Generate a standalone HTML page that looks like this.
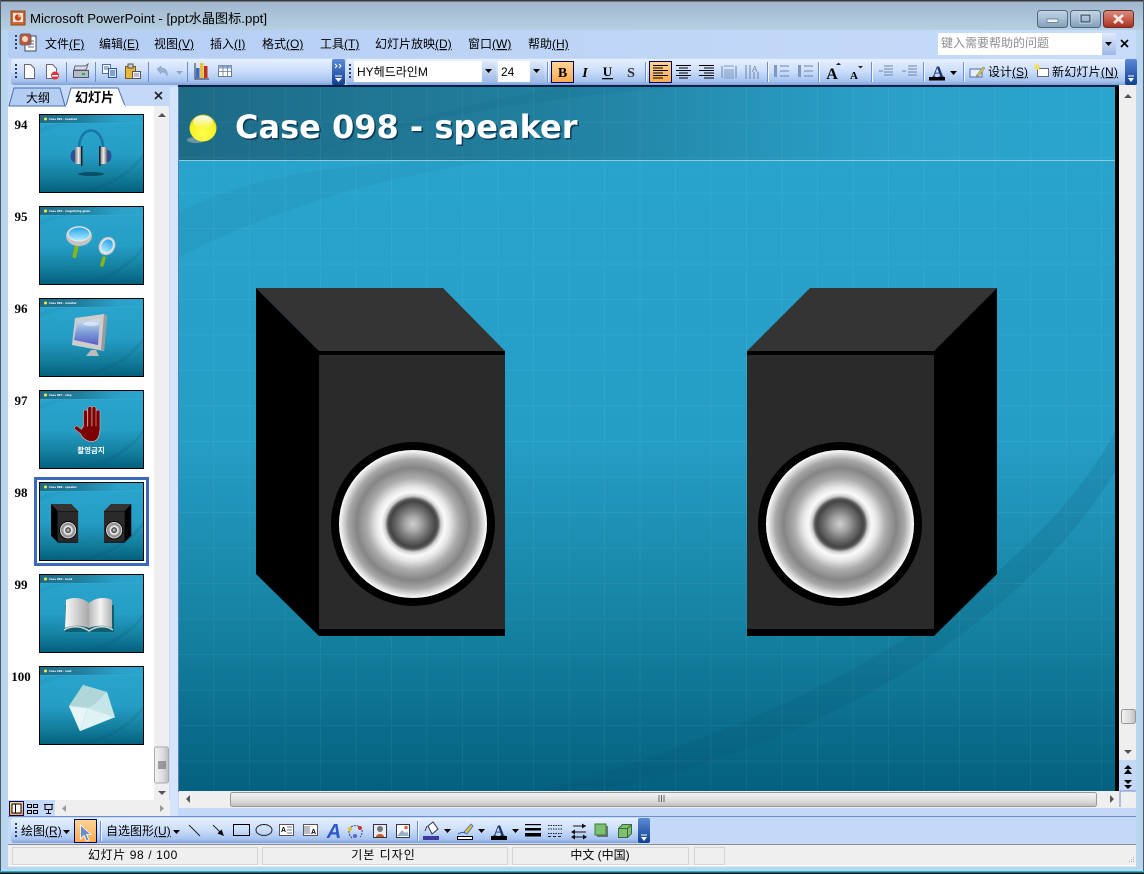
<!DOCTYPE html>
<html><head><meta charset="utf-8"><title>Microsoft PowerPoint</title>
<style>
html,body{margin:0;padding:0;background:#c4d9f8}
svg{display:block}
text{font-family:"Liberation Sans","Noto Sans CJK SC",sans-serif;font-size:12px;fill:#000}
.kr{font-family:"Liberation Sans","Noto Sans CJK KR",sans-serif}
.u{text-decoration:underline}
.n{font-family:"Liberation Serif",serif;font-weight:bold;font-size:13px;text-anchor:middle}
.tt{font-family:"DejaVu Sans",sans-serif;font-weight:bold;font-size:2.6px;fill:#fff}
</style></head><body>
<svg xmlns="http://www.w3.org/2000/svg" width="1144" height="874" viewBox="0 0 1144 874">
<defs>
<linearGradient id="title" x1="0" y1="0" x2="0" y2="1"><stop offset="0" stop-color="#9fb5cc"/><stop offset="1" stop-color="#b6cfe2"/></linearGradient>
<linearGradient id="menu" x1="0" y1="0" x2="1" y2="0"><stop offset="0" stop-color="#b4cdf3"/><stop offset="1" stop-color="#c8dcfa"/></linearGradient>
<linearGradient id="tb" x1="0" y1="0" x2="0" y2="1"><stop offset="0" stop-color="#e6f0fe"/><stop offset=".45" stop-color="#cddffb"/><stop offset=".85" stop-color="#a6c3ef"/><stop offset="1" stop-color="#7f9fd8"/></linearGradient>
<linearGradient id="chev" x1="0" y1="0" x2="0" y2="1"><stop offset="0" stop-color="#5b8ad6"/><stop offset="1" stop-color="#103f91"/></linearGradient>
<linearGradient id="dd" x1="0" y1="0" x2="0" y2="1"><stop offset="0" stop-color="#dfeafc"/><stop offset="1" stop-color="#9db9e8"/></linearGradient>
<linearGradient id="or" x1="0" y1="0" x2="0" y2="1"><stop offset="0" stop-color="#ffd596"/><stop offset="1" stop-color="#fba94f"/></linearGradient>
<linearGradient id="wb" x1="0" y1="0" x2="0" y2="1"><stop offset="0" stop-color="#c4d6e6"/><stop offset=".5" stop-color="#a5bdd3"/><stop offset="1" stop-color="#7f9db8"/></linearGradient>
<linearGradient id="wc" x1="0" y1="0" x2="0" y2="1"><stop offset="0" stop-color="#d98e82"/><stop offset=".5" stop-color="#c9604f"/><stop offset="1" stop-color="#a3301f"/></linearGradient>
<linearGradient id="sb" x1="0" y1="0" x2="0" y2="1"><stop offset="0" stop-color="#f4f4f4"/><stop offset=".6" stop-color="#dcdcdc"/><stop offset="1" stop-color="#bdbdbd"/></linearGradient>
<linearGradient id="sbv" x1="0" y1="0" x2="1" y2="0"><stop offset="0" stop-color="#f4f4f4"/><stop offset=".6" stop-color="#dcdcdc"/><stop offset="1" stop-color="#bdbdbd"/></linearGradient>
<linearGradient id="sky" x1="0" y1="0" x2="0" y2="1"><stop offset="0" stop-color="#2aa5ce"/><stop offset=".5" stop-color="#259ec6"/><stop offset=".78" stop-color="#14809f"/><stop offset="1" stop-color="#04607f"/></linearGradient>
<linearGradient id="hd" x1="0" y1="0" x2="1" y2="0"><stop offset="0" stop-color="#1d6b86"/><stop offset=".4" stop-color="#21809f"/><stop offset=".75" stop-color="#2aa0c8"/><stop offset="1" stop-color="#2aa5ce"/></linearGradient>
<pattern id="grid" width="35.5" height="35.5" patternUnits="userSpaceOnUse"><path d="M35 0V35.5M0 35H35.5" stroke="#fff" stroke-opacity=".05" fill="none"/></pattern>
<radialGradient id="cone"><stop offset="0" stop-color="#cfcfcf"/><stop offset=".1" stop-color="#a8a8a8"/><stop offset=".22" stop-color="#6c6c6c"/><stop offset=".31" stop-color="#444"/><stop offset=".34" stop-color="#5c5c5c"/><stop offset=".38" stop-color="#d0d0d0"/><stop offset=".43" stop-color="#fafafa"/><stop offset=".5" stop-color="#e6e6e6"/><stop offset=".62" stop-color="#ababab"/><stop offset=".76" stop-color="#858585"/><stop offset=".87" stop-color="#a6a6a6"/><stop offset="1" stop-color="#fff"/></radialGradient>
<radialGradient id="ball" cx=".5" cy=".7" r=".65"><stop offset="0" stop-color="#ffff50"/><stop offset=".8" stop-color="#f5f020"/><stop offset="1" stop-color="#c8c020"/></radialGradient>
<linearGradient id="ballh" x1="0" y1="0" x2="0" y2="1"><stop offset="0" stop-color="#fff"/><stop offset="1" stop-color="#fff" stop-opacity="0"/></linearGradient>
<linearGradient id="met" x1="0" y1="0" x2="1" y2="0"><stop offset="0" stop-color="#777"/><stop offset=".5" stop-color="#eee"/><stop offset="1" stop-color="#666"/></linearGradient>
<linearGradient id="lens" x1="0" y1="0" x2="0" y2="1"><stop offset="0" stop-color="#20a0e8"/><stop offset="1" stop-color="#b8f0ff"/></linearGradient>
<linearGradient id="scr" x1="0" y1="0" x2="0" y2="1"><stop offset="0" stop-color="#cfe0f0"/><stop offset=".5" stop-color="#7fa0d8"/><stop offset="1" stop-color="#5a5cc8"/></linearGradient>
<linearGradient id="pg" x1="0" y1="0" x2="1" y2="0"><stop offset="0" stop-color="#f8f8f8"/><stop offset="1" stop-color="#a8a8a8"/></linearGradient>
<linearGradient id="pg2" x1="1" y1="0" x2="0" y2="0"><stop offset="0" stop-color="#b0b0b0"/><stop offset=".5" stop-color="#f4f4f4"/><stop offset="1" stop-color="#b8b8b8"/></linearGradient>

<g id="bg">
<rect width="936" height="704" fill="url(#sky)"/>
<rect width="936" height="73" fill="url(#hd)"/>
<path d="M0 125C90 80 190 75 340 70C190 90 90 125 0 170Z" fill="#0a5878" opacity=".07"/>
<path d="M60 100C150 50 280 18 500 0L380 0C260 22 140 55 60 100Z" fill="#0a5878" opacity=".10"/>
<path d="M360 704C600 640 840 520 936 345L936 385C840 540 640 660 420 704Z" fill="#0a4f70" opacity=".16"/>
<rect width="936" height="704" fill="url(#grid)"/>
<rect y="73" width="936" height="1" fill="#8ccbdf"/>
</g>
<g id="spk">
<polygon points="256,288 443,288 505,351 319,351" fill="#343434"/>
<polygon points="256,288 319,351 319,636 256,574" fill="#000"/>
<rect x="319" y="351" width="186" height="285" fill="#2a2a2a"/>
<rect x="319" y="351" width="186" height="4" fill="#000"/>
<rect x="319" y="629" width="186" height="7" fill="#000"/>
<circle cx="413" cy="524" r="82" fill="#000"/>
<circle cx="413" cy="524" r="74" fill="url(#cone)"/>
</g>
<g id="spr">
<polygon points="810,288 997,288 934,351 747,351" fill="#343434"/>
<polygon points="997,288 934,351 934,636 997,574" fill="#000"/>
<rect x="747" y="351" width="187" height="285" fill="#2a2a2a"/>
<rect x="747" y="351" width="187" height="4" fill="#000"/>
<rect x="747" y="629" width="187" height="7" fill="#000"/>
<circle cx="840" cy="524" r="82" fill="#000"/>
<circle cx="840" cy="524" r="74" fill="url(#cone)"/>
</g>
<g id="grip" fill="#27416f"><rect x="0" y="0" width="2" height="2"/><rect x="0" y="4" width="2" height="2"/><rect x="0" y="8" width="2" height="2"/><rect x="0" y="12" width="2" height="2"/></g>
<path id="da" d="M0 0H7L3.5 4Z" fill="#000"/>
</defs>

<!-- window frame -->
<rect width="1144" height="874" fill="#b9d6ee"/>
<rect width="1144" height="30" fill="url(#title)"/>
<rect width="1144" height="1.5" fill="#3a3a3a"/>
<rect x="0" width="1" height="874" fill="#4a5a68"/>
<rect x="1143" width="1" height="874" fill="#4a5a68"/>
<rect x="8" y="30" width="1128" height="815" fill="#c4d9f8"/>
<rect x="8" y="30" width="1128" height="28" fill="url(#menu)"/>
<rect y="871" width="1144" height="1.5" fill="#25b5cf"/>
<rect y="872.5" width="1144" height="1.5" fill="#111"/>

<!-- title -->
<g>
<rect x="11" y="11" width="14" height="14" fill="#d8632e" stroke="#8a4a2a"/>
<rect x="13" y="13" width="10" height="9" fill="#fbe8d8"/>
<circle cx="18" cy="17.5" r="3.2" fill="#c6421c"/>
<path d="M18 17.5V14.3A3.2 3.2 0 0 1 21.2 17.5Z" fill="#f2a06a"/>
</g>
<text x="30" y="23" style="font-size:13px" textLength="237" lengthAdjust="spacingAndGlyphs">Microsoft PowerPoint - [ppt水晶图标.ppt]</text>
<rect x="1037.5" y="10.5" width="30" height="17" rx="3" fill="url(#wb)" stroke="#54687c"/>
<rect x="1047" y="19" width="11" height="3.5" fill="#eef4f8" stroke="#5a6a7c" stroke-width=".7"/>
<rect x="1070.5" y="10.5" width="30" height="17" rx="3" fill="url(#wb)" stroke="#54687c"/>
<rect x="1081" y="15" width="9" height="7" fill="none" stroke="#41566e" stroke-width="1.4"/><rect x="1080" y="14" width="11" height="9" fill="none" stroke="#eef4f8" stroke-width=".6"/>
<rect x="1103.5" y="10.5" width="30" height="17" rx="3" fill="url(#wc)" stroke="#6e2a22"/>
<path d="M1114 15L1123 23M1123 15L1114 23" stroke="#f5e6e2" stroke-width="2.8"/>

<!-- menu -->
<use href="#grip" x="15" y="35"/>
<g>
<rect x="25" y="36" width="11" height="15" fill="#fff" stroke="#445"/>
<rect x="20" y="34" width="11" height="11" rx="2" fill="#c4553a" stroke="#666"/>
<circle cx="25" cy="39" r="3" fill="#f4d8c0"/>
<path d="M28 41H34M28 44H34M28 47H34" stroke="#668"/>
</g>
<text x="45" y="48">文件<tspan class="u">(F)</tspan></text>
<text x="99" y="48">编辑<tspan class="u">(E)</tspan></text>
<text x="154" y="48">视图<tspan class="u">(V)</tspan></text>
<text x="210" y="48">插入<tspan class="u">(I)</tspan></text>
<text x="262" y="48">格式<tspan class="u">(O)</tspan></text>
<text x="320" y="48">工具<tspan class="u">(T)</tspan></text>
<text x="375" y="48">幻灯片放映<tspan class="u">(D)</tspan></text>
<text x="468" y="48">窗口<tspan class="u">(W)</tspan></text>
<text x="528" y="48">帮助<tspan class="u">(H)</tspan></text>
<rect x="938" y="33" width="178" height="22" fill="#fff"/>
<rect x="1102" y="33" width="14" height="22" fill="url(#dd)"/>
<text x="941" y="47" style="fill:#8f8f8f">键入需要帮助的问题</text>
<use href="#da" x="1105" y="42"/>
<path d="M1121 40L1128 47M1128 40L1121 47" stroke="#000" stroke-width="1.6"/>

<!-- toolbar 1 & 2 -->
<rect x="11" y="59" width="334" height="26" rx="3" fill="url(#tb)"/>
<rect x="332" y="59" width="13" height="26" rx="2" fill="url(#chev)"/>
<path d="M335 64l2 2-2 2M339 64l2 2-2 2" stroke="#fff" fill="none"/><path d="M335 76h7" stroke="#fff"/><path d="M335 78h7l-3.5 4z" fill="#fff"/>
<rect x="346" y="59" width="791" height="26" rx="3" fill="url(#tb)"/>
<rect x="1125" y="59" width="12" height="26" rx="2" fill="url(#chev)"/>
<path d="M1128 76h6" stroke="#fff"/><path d="M1128 78h6l-3 4z" fill="#fff"/>
<use href="#grip" x="15" y="64"/>
<use href="#grip" x="349" y="64"/>

<!-- new -->
<path d="M24.5 64.5h6l4 4v10h-10z" fill="#fff" stroke="#667"/>
<path d="M46.5 64.5h6l4 4v10h-10z" fill="#fff" stroke="#667"/>
<circle cx="55" cy="75.500" r="4" fill="#d33"/><rect x="52" y="75" width="6" height="1.500" fill="#fff"/>
<path d="M66.500 62v20M95.500 62v20M148.500 62v20M187.500 62v20" stroke="#6c8fc8"/>
<!-- print -->
<path d="M75 66h10l3-2-2 6H74z" fill="#dde" stroke="#667"/>
<rect x="73.500" y="70.500" width="15" height="7" fill="#b4bcc8" stroke="#556"/><rect x="82" y="73" width="3" height="2" fill="#3a3"/>
<!-- copy -->
<rect x="102.500" y="64.500" width="8" height="9" fill="#fff" stroke="#4a6ea8"/><path d="M104 67h5M104 69h5" stroke="#4a6ea8"/>
<rect x="108.500" y="68.500" width="8" height="9" fill="#dbe8fa" stroke="#2c5aa0"/><path d="M110 71h5M110 73h5M110 75h5" stroke="#2c5aa0"/>
<!-- paste -->
<rect x="125.500" y="66.500" width="10" height="12" fill="#e4b93c" stroke="#7a5a1a"/><rect x="128" y="64" width="5" height="4" fill="#ccc" stroke="#555"/>
<rect x="132.500" y="71.500" width="8" height="7" fill="#f0f0f8" stroke="#556"/><path d="M134 74h5M134 76h5" stroke="#889"/>
<!-- undo -->
<path d="M157 69l4-3v2c5 0 7 3 6 8-1-3-3-4-6-4v2z" fill="#9ab0d0" stroke="#8198be" stroke-width=".5"/>
<path d="M176 71h7l-3.500 3.500z" fill="#8ea5c8"/>
<!-- chart -->
<rect x="196" y="68" width="3.500" height="10" fill="#3a6ad0"/><rect x="200" y="63" width="3.500" height="15" fill="#e8c030"/><rect x="204" y="66" width="3.500" height="12" fill="#c03020"/>
<path d="M195 63v16h14" stroke="#333" fill="none"/>
<!-- table -->
<rect x="218.500" y="65.500" width="13" height="11" fill="#fff" stroke="#667c9c"/><rect x="218.500" y="65.500" width="13" height="3" fill="#8faad0"/><path d="M223 66v10M227.500 66v10M219 71.500h12" stroke="#667c9c" stroke-width=".8"/>

<!-- font box -->
<rect x="354" y="61" width="142" height="21" fill="#fff"/>
<rect x="482" y="61" width="14" height="21" fill="url(#dd)"/>
<text x="357" y="76" class="kr" style="font-size:12px">HY헤드라인M</text>
<use href="#da" x="485" y="69"/>
<rect x="498" y="61" width="46" height="21" fill="#fff"/>
<rect x="530" y="61" width="14" height="21" fill="url(#dd)"/>
<text x="501" y="76" style="font-size:12px">24</text>
<use href="#da" x="533" y="69"/>
<path d="M547.500 62v20M645.500 62v20M767.500 62v20M818.500 62v20M871.500 62v20M923.500 62v20M963.500 62v20" stroke="#6c8fc8"/><path d="M548.500 62v20M646.500 62v20M768.500 62v20M819.500 62v20M872.500 62v20M924.500 62v20M964.500 62v20" stroke="#f2f7ff"/>

<rect x="551.500" y="61.500" width="22" height="21" fill="url(#or)" stroke="#00006e"/>
<text x="562.500" y="77" style="font-family:'Liberation Serif',serif;font-weight:bold;font-size:14px" text-anchor="middle">B</text>
<text x="585" y="77" style="font-family:'Liberation Serif',serif;font-weight:bold;font-style:italic;font-size:14px" text-anchor="middle">I</text>
<text x="607.500" y="76" style="font-family:'Liberation Serif',serif;font-weight:bold;font-size:13px" text-anchor="middle">U</text><rect x="602" y="78" width="11" height="1.300"/>
<text x="631" y="77" style="font-family:'Liberation Serif',serif;font-weight:bold;font-size:14px;fill:#333;" text-anchor="middle">S</text>
<rect x="649.500" y="61.500" width="22" height="21" fill="url(#or)" stroke="#00006e"/>
<path d="M653 65.500h15M653 68h10M653 70.500h15M653 73h10M653 75.500h15M653 78h10" stroke="#000"/>
<path d="M676 65.500h15M679 68h9M676 70.500h15M679 73h9M676 75.500h15M679 78h9" stroke="#000"/>
<path d="M699 65.500h15M704 68h10M699 70.500h15M704 73h10M699 75.500h15M704 78h10" stroke="#000"/>
<g stroke="#6c84a8"><path d="M722 66v12M736 66v12" /><path d="M724 70h10M724 72h10M724 74h10M724 76h10M724 78h10M724 66h10" stroke-width=".8"/></g>
<g stroke="#6c84a8" fill="none"><path d="M746 65v14M750 65v14M754 72v7M758 72v7" /></g><text x="752" y="72" style="font-size:8px;fill:#6c84a8">A</text>
<g fill="#8198be"><rect x="774" y="65" width="3" height="12"/></g><path d="M780 66h9M780 71h9M780 76h9" stroke="#6c84a8"/>
<g fill="#8198be"><rect x="798" y="65" width="3" height="12"/></g><path d="M804 66h9M804 71h9M804 76h9" stroke="#6c84a8"/>
<text x="832" y="79" style="font-family:'Liberation Serif',serif;font-weight:bold;font-size:16px" text-anchor="middle">A</text><path d="M836 65h5l-2.500-2.500z" fill="#223"/>
<text x="854" y="79" style="font-family:'Liberation Serif',serif;font-weight:bold;font-size:11px" text-anchor="middle">A</text><path d="M858 66h5l-2.500 2.500z" fill="#223"/>
<g stroke="#6c84a8"><path d="M884 66h9M884 69h9M884 72h9M884 75h9M879 71h4"/><path d="M908 66h9M908 69h9M908 72h9M908 75h9M902 71h4"/></g>
<text x="938" y="77" style="font-family:'Liberation Serif',serif;font-weight:bold;font-size:16px;fill:#20366c;" text-anchor="middle">A</text><rect x="929" y="77" width="16" height="3.500"/>
<use href="#da" x="950" y="71"/>
<path d="M970 69h12v8h-12z" fill="#e6eefb" stroke="#4a6ea8"/><path d="M976 76l7-9 2 1-6 8z" fill="#e8c030" stroke="#4a6ea8" stroke-width=".5"/>
<text x="988" y="76">设计<tspan class="u">(S)</tspan></text>
<rect x="1037.500" y="68.500" width="11" height="8" fill="#fff" stroke="#667"/><circle cx="1037" cy="67" r="2.800" fill="#f4e060"/>
<text x="1052" y="76" style="letter-spacing:.2px">新幻灯片<tspan class="u">(N)</tspan></text>

<!-- left pane -->
<rect x="8" y="106" width="146" height="695" fill="#fff"/>
<rect x="154" y="106" width="15" height="695" fill="#efefef"/>
<rect x="170" y="87" width="8" height="730" fill="#d4e4fb"/>
<rect x="8" y="87" width="162" height="19" fill="#c4d9f8"/>
<path d="M9 106L14 88H60L65 106Z" fill="#b4cdf3" stroke="#4a6ea8"/>
<path d="M66 106L71 88H118L125 106Z" fill="#fff" stroke="#4a6ea8"/>
<rect x="66" y="105" width="59" height="2" fill="#fff"/>
<text x="26" y="102">大纲</text>
<text x="75" y="102" style="font-weight:bold;font-size:13px">幻灯片</text>
<path d="M155 92L162 99M162 92L155 99" stroke="#222" stroke-width="1.600"/>
<path d="M158 117h8l-4-4z" fill="#555"/>
<path d="M158 791h8l-4 4z" fill="#555"/>
<rect x="154.500" y="747" width="14" height="36" rx="2" fill="url(#sbv)" stroke="#aaa"/>
<path d="M158 762h8M158 764h8M158 766h8M158 768h8" stroke="#555"/>
<rect x="8" y="800" width="47" height="17" fill="#c4d9f8"/>
<rect x="55" y="800" width="115" height="17" fill="#efefef"/>
<rect x="9.500" y="801.500" width="14" height="14" fill="url(#or)" stroke="#00006e"/>
<rect x="12" y="804" width="9" height="9" fill="#fff" stroke="#000"/><path d="M15.500 804v9" stroke="#000"/>
<g fill="none" stroke="#000"><rect x="27.500" y="804.500" width="4" height="3"/><rect x="33.500" y="804.500" width="4" height="3"/><rect x="27.500" y="810.500" width="4" height="3"/><rect x="33.500" y="810.500" width="4" height="3"/></g>
<path d="M44 804.500h9M45 804.500v5h7v-5M48.500 810v3M46 813.500h5" stroke="#000" fill="none"/>
<path d="M66 805v7l-4-3.500zM160 805v7l4-3.500z" fill="#999"/>

<!-- numbers -->
<text x="21" y="129" class="n">94</text>
<text x="21" y="221" class="n">95</text>
<text x="21" y="313" class="n">96</text>
<text x="21" y="405" class="n">97</text>
<text x="21" y="497" class="n">98</text>
<text x="21" y="589" class="n">99</text>
<text x="21" y="681" class="n">100</text>

<!-- selection -->
<rect x="35.500" y="478.500" width="112" height="86" fill="#fff" stroke="#3d69bd" stroke-width="3"/>

<!-- thumbnails -->
<g id="th">
<g stroke="#000" stroke-width="1" fill="none">
<rect x="39.500" y="114.500" width="104" height="78"/><rect x="39.500" y="206.500" width="104" height="78"/><rect x="39.500" y="298.500" width="104" height="78"/><rect x="39.500" y="390.500" width="104" height="78"/><rect x="39.500" y="482.500" width="104" height="78"/><rect x="39.500" y="574.500" width="104" height="78"/><rect x="39.500" y="666.500" width="104" height="78"/>
</g>
<use href="#bg" transform="translate(40,115) scale(.1101,.1094)"/>
<use href="#bg" transform="translate(40,207) scale(.1101,.1094)"/>
<use href="#bg" transform="translate(40,299) scale(.1101,.1094)"/>
<use href="#bg" transform="translate(40,391) scale(.1101,.1094)"/>
<use href="#bg" transform="translate(40,483) scale(.1101,.1094)"/>
<use href="#bg" transform="translate(40,575) scale(.1101,.1094)"/>
<use href="#bg" transform="translate(40,667) scale(.1101,.1094)"/>
<g fill="#f0f040"><circle cx="45.500" cy="119" r="1.500"/><circle cx="45.500" cy="211" r="1.500"/><circle cx="45.500" cy="303" r="1.500"/><circle cx="45.500" cy="395" r="1.500"/><circle cx="45.500" cy="487" r="1.500"/><circle cx="45.500" cy="579" r="1.500"/><circle cx="45.500" cy="671" r="1.500"/></g>
<text x="49" y="120" class="tt">Case 094 - headset</text>
<text x="49" y="212" class="tt">Case 095 - magnifying glass</text>
<text x="49" y="304" class="tt">Case 096 - monitor</text>
<text x="49" y="396" class="tt">Case 097 - stop</text>
<text x="49" y="488" class="tt">Case 098 - speaker</text>
<text x="49" y="580" class="tt">Case 099 - book</text>
<text x="49" y="672" class="tt">Case 100 - mail</text>

<!-- headphones -->
<path d="M79 150C78 124 104 124 103 150" fill="none" stroke="#1a73a5" stroke-width="2.400"/>
<ellipse cx="74" cy="156" rx="3.500" ry="6" fill="#2e4f96"/><ellipse cx="108" cy="156" rx="3.500" ry="6" fill="#2e4f96"/>
<rect x="75" y="147" width="7" height="17" fill="url(#met)"/><rect x="100" y="147" width="7" height="17" fill="url(#met)"/>
<rect x="81" y="146" width="1.500" height="20" fill="#123"/><rect x="99" y="146" width="1.500" height="20" fill="#123"/>
<ellipse cx="91" cy="174" rx="13" ry="2" fill="#0a4f68"/>

<!-- magnifiers -->
<path d="M77 245L74.500 256" stroke="#8cb414" stroke-width="4" stroke-linecap="round"/>
<ellipse cx="79" cy="236" rx="13" ry="10" fill="#c4c4c4"/><ellipse cx="79" cy="234" rx="11" ry="7" fill="url(#lens)" stroke="#eee"/>
<path d="M104 258L102 265" stroke="#8cb414" stroke-width="3.500" stroke-linecap="round"/>
<ellipse cx="107" cy="246" rx="8" ry="9.500" transform="rotate(30 107 246)" fill="#ccc"/><ellipse cx="107" cy="246" rx="6" ry="7.500" transform="rotate(30 107 246)" fill="url(#lens)" stroke="#eee"/>

<!-- monitor -->
<path d="M75 318L104 314L107 316L104 351L72 345Z" fill="#cdcdcd"/>
<path d="M77 322L100 319L98 345L74 340Z" fill="url(#scr)"/>
<path d="M104 314L107 316L104 351L101 350Z" fill="#9a9a9a"/>
<path d="M91 350h5l3 6H86Z" fill="#bbb"/>
<ellipse cx="91" cy="324" rx="8" ry="2" fill="#fff" opacity=".5"/>

<!-- hand -->
<g fill="none" stroke-linecap="round">
<g stroke="#d8b0b4" stroke-width="4.600"><path d="M85.500 428V412M89.800 428V408.500M94 428V408.500M98 430V412M84 434L76.500 428"/></g>
<path d="M83.500 426H99.500V431C99.500 438 96.500 441.500 92 441.500C87.500 441.500 84.500 440 81.500 436L80 431Z" fill="#7c0202" stroke="#d8b0b4" stroke-width=".7"/>
<g stroke="#7c0202" stroke-width="3.400"><path d="M85.500 429V412M89.800 429V408.500M94 429V408.500M98 430V412M84 434L76.500 428"/></g>
</g>
<text x="91" y="453" class="kr" text-anchor="middle" style="font-size:7.500px;font-weight:bold;fill:#fff">촬영금지</text>

<!-- speakers -->
<use href="#spk" transform="translate(51,504) scale(.109,.111) translate(-256,-288)"/>
<use href="#spr" transform="translate(104,504) scale(.109,.111) translate(-747,-288)"/>

<!-- book -->
<path d="M65 605V632L89 632L114 632V605Z" fill="#0e5f70"/>
<path d="M66 600C72 597 82 597 89 603V628C82 625 72 625 65 628Z" fill="url(#pg)"/>
<path d="M89 603C96 597 106 597 112 600V628C106 625 96 625 89 628Z" fill="url(#pg2)"/>
<path d="M64 630C72 625 82 626 89 631C96 626 106 625 113 630" fill="none" stroke="#d4d4d4" stroke-width="1.500"/>

<!-- envelope -->
<path d="M83 685L107 692L115 717L80 731L69 706Z" fill="#c4e6e8"/>
<path d="M83 685L107 692L95 704L88 708L69 706Z" fill="#b0d6d8"/>
<path d="M69 706L88 708L80 731Z" fill="#e6f6f7" stroke="#bfe0e2" stroke-width=".4"/>
<path d="M88 708L115 717L80 731Z" fill="#dff2f4" stroke="#bfe0e2" stroke-width=".4"/>
</g>

<!-- slide -->
<rect x="178" y="87" width="1" height="705" fill="#5a7fc0"/>
<use href="#bg" x="179" y="87"/>
<rect x="178" y="85" width="941" height="2" fill="#0d1e45"/>
<rect x="1115" y="87" width="4" height="705" fill="#000"/>
<ellipse cx="196" cy="140" rx="9" ry="3" fill="#8aa6ae" opacity=".75"/>
<circle cx="203" cy="128" r="13.500" fill="url(#ball)"/>
<ellipse cx="203" cy="122" rx="10" ry="6.500" fill="url(#ballh)"/>
<text x="236.500" y="139.500" style="font-family:'DejaVu Sans',sans-serif;font-weight:bold;font-size:32px;fill:#0d3a55;">Case 098 - speaker</text>
<text x="235" y="138" style="font-family:'DejaVu Sans',sans-serif;font-weight:bold;font-size:32px;fill:#fff;">Case 098 - speaker</text>
<use href="#spk"/>
<use href="#spr"/>

<!-- right scrollbar -->
<rect x="1119" y="85" width="17" height="675" fill="#efefef"/>
<rect x="1119" y="760" width="17" height="31" fill="#c4d9f8"/>
<path d="M1124 98h8l-4-4z" fill="#555"/>
<path d="M1124 750h8l-4 4z" fill="#555"/>
<rect x="1121.500" y="709.500" width="14" height="14" rx="2" fill="url(#sbv)" stroke="#999"/>
<path d="M1124 769h8l-4-4zM1124 774h8l-4-5z" fill="#000"/>
<path d="M1124 780h8l-4 4zM1124 785h8l-4 4z" fill="#000"/>
<!-- hscroll -->
<rect x="179" y="791" width="941" height="17" fill="#efefef"/>
<rect x="1120" y="791" width="16" height="17" fill="#efefef"/>
<path d="M1120 791h16M1120 791v16" stroke="#6c8fc8"/>
<rect x="230.500" y="792.500" width="866" height="14" rx="2" fill="url(#sb)" stroke="#999"/>
<path d="M659 795v7M661.500 795v7M664 795v7" stroke="#666"/>
<path d="M190 795v8l-4-4zM1110 795v8l4-4z" fill="#555"/>

<!-- draw toolbar -->
<rect x="8" y="816" width="1128" height="1" fill="#6c8fc8"/>
<rect x="11" y="818" width="639" height="25" rx="3" fill="url(#tb)"/>
<rect x="638" y="818" width="12" height="25" rx="2" fill="url(#chev)"/>
<path d="M641 835h6" stroke="#fff"/><path d="M641 837h6l-3 4z" fill="#fff"/>
<use href="#grip" x="15" y="823"/>
<text x="21" y="835">绘图<tspan class="u">(R)</tspan></text>
<use href="#da" x="63" y="830"/>
<rect x="74.500" y="819.500" width="22" height="23" fill="url(#or)" stroke="#00006e"/>
<path d="M80.500 825V839L84 835.500L86.500 841L89 840L86.500 834.500H91Z" fill="#6a8ec4" stroke="#fff" stroke-width=".8"/>
<path d="M100.500 821v20M417.500 821v20" stroke="#6c8fc8"/><path d="M101.500 821v20M418.500 821v20" stroke="#f2f7ff"/>
<text x="106" y="835">自选图形<tspan class="u">(U)</tspan></text>
<use href="#da" x="173" y="830"/>
<path d="M189 825L200 836" stroke="#222"/>
<path d="M213 825L222 834" stroke="#222"/><path d="M224 836L217.500 833.500L221.500 829.500Z" fill="#000"/>
<rect x="233.500" y="824.500" width="16" height="11" fill="#fff" stroke="#000" fill-opacity="0"/>
<ellipse cx="264" cy="830" rx="8" ry="5.500" fill="none" stroke="#222"/>
<rect x="279.500" y="824.500" width="14" height="11" fill="#fff" stroke="#555"/><text x="281" y="832" style="font-size:7px;font-weight:bold">A</text><path d="M287 827h5M287 830h5M287 833h5" stroke="#778"/>
<rect x="303.500" y="824.500" width="14" height="11" fill="#fff" stroke="#555"/><text x="311" y="834" style="font-size:7px;font-weight:bold">A</text><path d="M305 826v8M307 826v8M309 826v8" stroke="#778"/>
<text x="334" y="838" text-anchor="middle" style="font-family:'Liberation Sans',sans-serif;font-weight:bold;font-style:italic;font-size:20px;fill:#2a5ac8;">A</text>
<g><path d="M351 827a8 8 0 0 1 9 0M362 830a8 8 0 0 1-2 7M352 838a8 8 0 0 1-3-7" fill="none" stroke="#445" stroke-dasharray="2 1"/><circle cx="350" cy="829" r="2" fill="#e0c030"/><circle cx="360" cy="828" r="2" fill="#d03030"/><circle cx="355" cy="836" r="2" fill="#6060d0"/></g>
<rect x="373.500" y="824.500" width="13" height="13" fill="#e8edf5" stroke="#334"/><circle cx="380" cy="829" r="3" fill="#777"/><path d="M376 837c0-4 8-4 8 0z" fill="#c85a20"/>
<rect x="396.500" y="824.500" width="13" height="13" fill="#fff" stroke="#334"/><path d="M397 836L402 830L405 833L407 831L409 836Z" fill="#9ab0c8"/><circle cx="406" cy="827.500" r="1.800" fill="#e86030"/>
<path d="M428 826L433 822L438 829L432 834Z" fill="#fff" stroke="#334"/><path d="M427 826l-2 5" stroke="#334"/><rect x="423" y="836" width="16" height="4" fill="#3a3aa0"/>
<use href="#da" x="444" y="829"/>
<path d="M464 832L471 824L473 826L467 834Z" fill="#e8c030" stroke="#2a5ac8" stroke-width=".7"/><path d="M458 834c3-2 5-2 7-1" stroke="#2a5ac8" fill="none"/><rect x="457.500" y="836.500" width="15" height="3" fill="#fff" stroke="#000"/>
<use href="#da" x="478" y="829"/>
<text x="499" y="836" text-anchor="middle" style="font-family:'Liberation Serif',serif;font-weight:bold;font-size:16px;fill:#20366c;">A</text><rect x="491" y="836" width="16" height="4"/>
<use href="#da" x="512" y="829"/>
<rect x="525" y="824" width="16" height="1.200"/><rect x="525" y="828" width="16" height="2.500"/><rect x="525" y="833" width="16" height="3.500"/>
<path d="M548 825.500h15M548 829h15M548 833.500h15" stroke="#223" stroke-dasharray="1.500 1"/><path d="M548 836.500h15" stroke="#223" stroke-dasharray="3 2"/>
<path d="M573 826h13M573 832h13M573 837h13" stroke="#111" stroke-width="1"/><path d="M586 826l-4-2.500v5zM571 832l4-2.500v5zM571 837l4-2.500v5zM587 837l-4-2.500v5z" fill="#111"/>
<rect x="597" y="826" width="11" height="11" fill="#222" opacity=".55"/><rect x="595" y="824" width="11" height="11" fill="#7cc070" stroke="#3a7a3a"/>
<path d="M618.500 828.500h9v9h-9zM618.500 828.500l4-4h9v9l-4 4M627.500 828.500l4-4" fill="#7cc070" stroke="#3a6a3a"/>

<!-- status -->
<rect x="8" y="844" width="1128" height="22" fill="#efefef"/>
<rect x="8" y="844" width="1128" height="1" fill="#8c8c8c"/>
<rect x="8" y="865" width="1128" height="1.500" fill="#fff"/>
<g fill="none" stroke="#d4d4d4"><rect x="12.500" y="847.500" width="245" height="17"/><rect x="262.500" y="847.500" width="245" height="17"/><rect x="512.500" y="847.500" width="176" height="17"/><rect x="694.500" y="847.500" width="30" height="17"/></g>
<text x="133" y="859" text-anchor="middle" style="letter-spacing:.6px">幻灯片 98 / 100</text>
<text x="383.500" y="859" text-anchor="middle" class="kr" style="letter-spacing:1px">기본 디자인</text>
<text x="600" y="859" text-anchor="middle">中文 (中国)</text>
<g fill="#aaa"><rect x="1133" y="857" width="1" height="1"/><rect x="1131" y="859" width="1" height="1"/><rect x="1133" y="859" width="1" height="1"/><rect x="1129" y="861" width="1" height="1"/><rect x="1131" y="861" width="1" height="1"/><rect x="1133" y="861" width="1" height="1"/></g>
</svg>
</body></html>
